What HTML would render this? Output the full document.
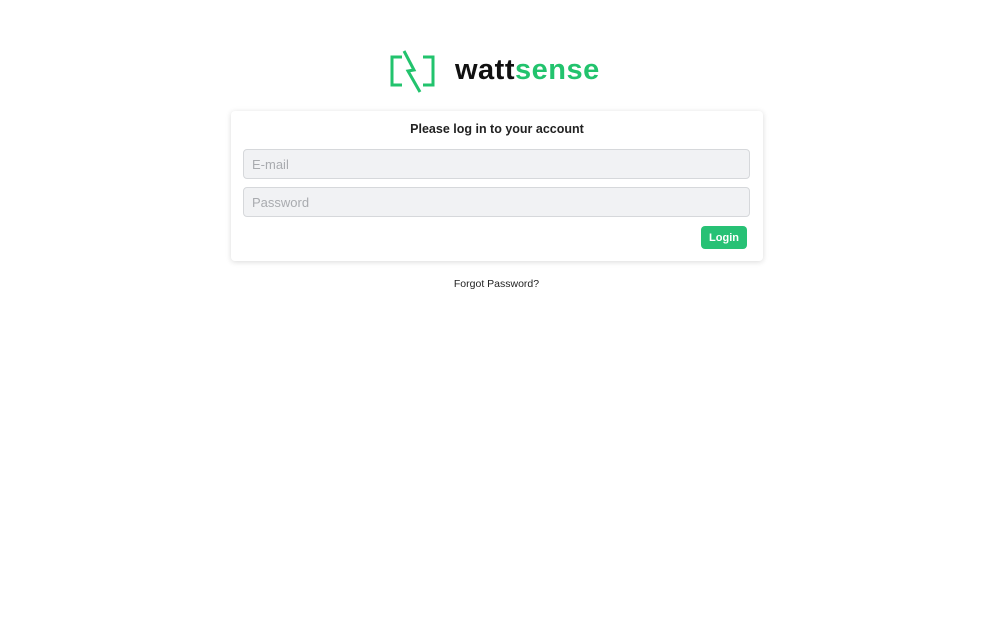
<!DOCTYPE html>
<html><head><style>
body{margin:0;width:1000px;height:621px;background:#fff;font-family:"Liberation Sans",sans-serif;position:relative;overflow:hidden}
.card{position:absolute;left:231px;top:111px;width:532px;height:150px;background:#fff;border-radius:4px;box-shadow:0 1px 6px rgba(0,0,0,.15)}
h1{position:absolute;left:0;right:0;top:11px;margin:0;text-align:center;font-size:12.5px;font-weight:bold;color:#222}
.in{position:absolute;left:12px;width:505px;height:28px;background:#f1f2f4;border:1px solid #d6d8db;border-radius:4px;font-size:13px;color:#a9abaf;line-height:30px;text-indent:8px}
.btn{position:absolute;left:470px;top:115px;width:46px;height:23px;background:#27c175;border-radius:4px;color:#fff;font-size:11px;font-weight:bold;text-align:center;line-height:24px}
.fp{position:absolute;left:0;width:993px;top:278px;text-align:center;font-size:10.5px;color:#222}
.logo{position:absolute;left:455px;top:54px;font-size:29px;font-weight:bold;letter-spacing:0.5px}
</style></head><body>
<svg style="position:absolute;left:388px;top:48px" width="50" height="48">
<path d="M14 9H4V37H14M35 9H45V37H35" fill="none" stroke="#22c36d" stroke-width="3"/>
<path d="M16 3L26 22L20 23L32 44" fill="none" stroke="#22c36d" stroke-width="3"/>
</svg>
<div class="logo"><span style="color:#111">watt</span><span style="color:#22c36d">sense</span></div>
<div class="card">
<h1>Please log in to your account</h1>
<div class="in" style="top:38px">E-mail</div>
<div class="in" style="top:76px">Password</div>
<div class="btn">Login</div>
</div>
<div class="fp">Forgot Password?</div>
</body></html>
